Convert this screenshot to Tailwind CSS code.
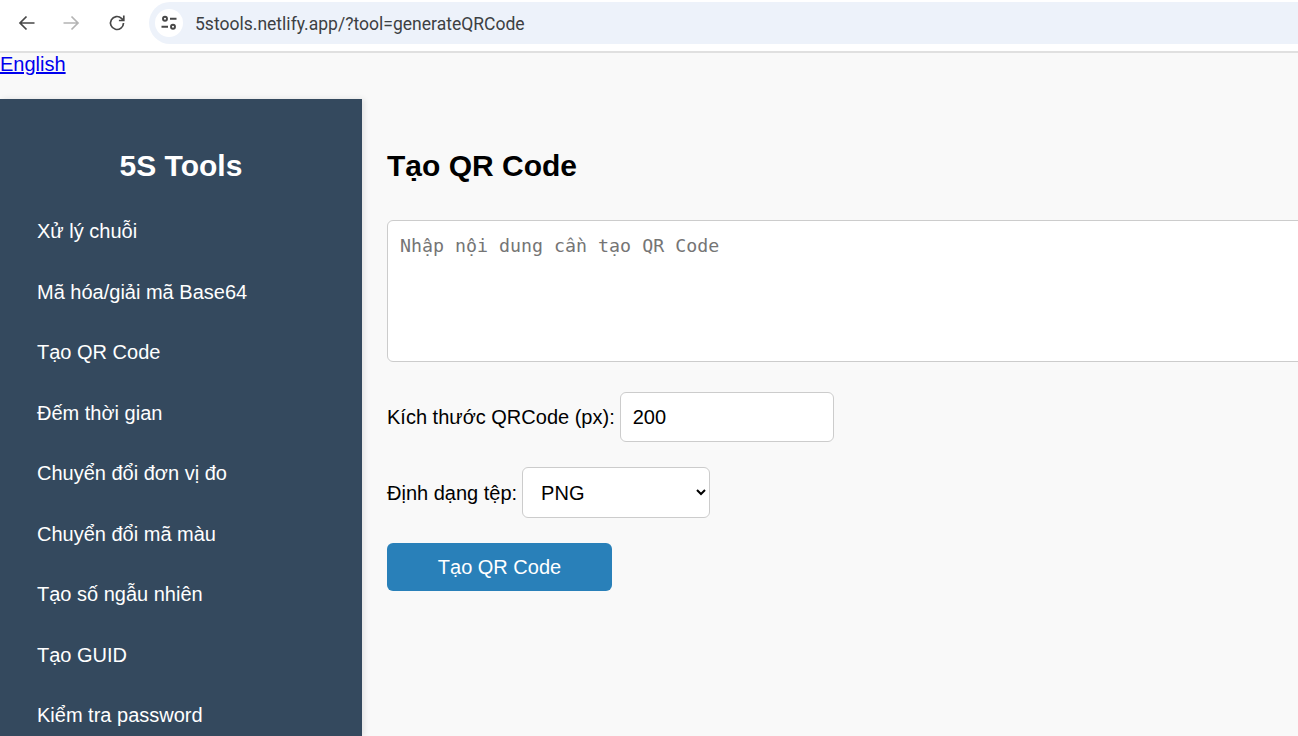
<!DOCTYPE html>
<html lang="vi">
<head>
  <meta charset="UTF-8" />
  <meta name="viewport" content="width=device-width, initial-scale=1.0" />
  <title>5S Tools</title>
  <script src="https://cdn.jsdelivr.net/npm/@tailwindcss/browser@4"></script>
</head>
<body class="h-[736px] w-[1298px] overflow-hidden bg-[#f9f9f9] font-['Liberation_Sans',sans-serif] text-black">

  <!-- Browser bar -->
  <div class="h-[53px] bg-white border-b-2 border-[#e0e0e0] flex items-center pb-[6px] pl-[15px]">
    <svg class="w-[24px] h-[24px] text-[#474747]" fill="none" stroke="currentColor" stroke-width="1.7" viewBox="0 0 24 24">
      <path d="M19.5 12H5M11.5 5.5L5 12l6.5 6.5" />
    </svg>
    <svg class="w-[24px] h-[24px] ml-[20px] text-[#b4b4b4]" fill="none" stroke="currentColor" stroke-width="1.7" viewBox="0 0 24 24">
      <path d="M4.5 12H19M12.5 5.5L19 12l-6.5 6.5" />
    </svg>
    <svg class="w-[24px] h-[24px] ml-[22px] text-[#474747]" fill="none" stroke="currentColor" stroke-width="1.7" viewBox="0 0 24 24">
      <path d="M18.5 12a6.5 6.5 0 1 1-2-4.7L18.5 9.3M18.8 4.6v4.9h-4.9" />
    </svg>
    <div class="ml-[20px] flex-1 h-[42px] bg-[#edf2fa] rounded-l-full flex items-center pl-[6px]">
      <div class="w-[28px] h-[28px] rounded-full bg-white flex items-center justify-center">
        <svg class="w-[18px] h-[18px] text-[#474747]" fill="none" stroke="currentColor" stroke-width="1.9" viewBox="0 0 18 18">
          <circle cx="5" cy="4.8" r="2" />
          <path d="M10 4.8h6.5M1.5 12.8h6.5" />
          <circle cx="13" cy="12.8" r="2" />
        </svg>
      </div>
      <span class="ml-[12px] pt-[3px] text-[17.55px] text-[#3c4043] font-['Roboto',sans-serif]">5stools.netlify.app/?tool=generateQRCode</span>
    </div>
  </div>

  <a href="#" class="block h-[46px] text-[20px] leading-[23px] text-[#0000ee] underline">English</a>

  <div class="flex h-[637px]">
    <!-- Sidebar -->
    <div class="w-[362px] shrink-0 bg-[#34495e] text-white shadow-[2px_0_6px_rgba(0,0,0,0.1)] pt-[49px]">
      <h2 class="text-center text-[30px] leading-[36px] font-bold">5S Tools</h2>
      <div class="mt-[17px] pl-[37px] flex flex-col text-[20px] leading-[60.5px]">
        <a href="#">Xử lý chuỗi</a>
        <a href="#">Mã hóa/giải mã Base64</a>
        <a href="#">Tạo QR Code</a>
        <a href="#">Đếm thời gian</a>
        <a href="#">Chuyển đổi đơn vị đo</a>
        <a href="#">Chuyển đổi mã màu</a>
        <a href="#">Tạo số ngẫu nhiên</a>
        <a href="#">Tạo GUID</a>
        <a href="#">Kiểm tra password</a>
      </div>
    </div>

    <!-- Main -->
    <div class="flex-1 pl-[25px] pt-[49px] min-w-0 overflow-hidden">
      <h1 class="text-[30px] leading-[36px] font-bold">Tạo QR Code</h1>
      <textarea placeholder="Nhập nội dung cần tạo QR Code" class="block mt-[36px] w-[1000px] h-[142px] bg-white border border-[#cccccc] rounded-[6px] px-[12px] py-[12px] text-[18.3px] leading-[26px] font-['DejaVu_Sans_Mono',monospace] placeholder:text-[#757575] resize-none"></textarea>
      <div class="mt-[30px] flex items-center text-[20px]">
        <label>Kích thước QRCode (px):</label>
        <input type="number" value="200" class="ml-[5px] w-[214px] h-[50px] bg-white border border-[#cccccc] rounded-[6px] px-[12px]" />
      </div>
      <div class="mt-[25px] flex items-center text-[20px]">
        <label>Định dạng tệp:</label>
        <select class="ml-[5px] w-[188px] h-[51px] bg-white border border-[#cccccc] rounded-[6px] pl-[14px]">
          <option>PNG</option>
        </select>
      </div>
      <button class="mt-[25px] block w-[225px] h-[48px] bg-[#2980b9] text-white text-[20px] rounded-[6px]">Tạo QR Code</button>
    </div>
  </div>

</body>
</html>
